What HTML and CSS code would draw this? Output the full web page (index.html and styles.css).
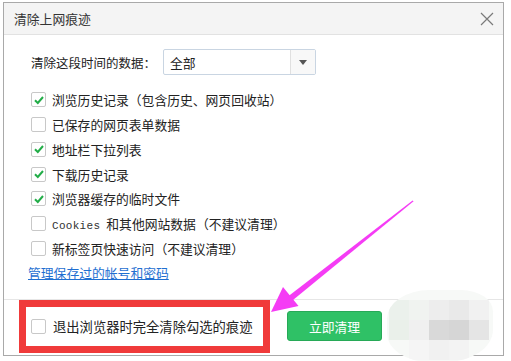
FILE: index.html
```html
<!DOCTYPE html>
<html lang="zh-CN">
<head>
<meta charset="utf-8">
<title>清除上网痕迹</title>
<link rel="stylesheet" href="styles.css">
</head>
<body>
<div class="dialog">
  <div class="titlebar">
    <span class="title">清除上网痕迹</span>
    <svg class="close" width="14" height="14" viewBox="0 0 14 14"><path d="M1 1L13 13M13 1L1 13" stroke="#7a7a7a" stroke-width="1.2" fill="none"/></svg>
  </div>
  <div class="content">
    <div class="range">
      <span class="label">清除这段时间的数据：</span>
      <div class="select">
        <span class="value">全部</span>
        <span class="caret"><svg width="8" height="5" viewBox="0 0 8 5"><path d="M0 0H8L4 5Z" fill="#555"/></svg></span>
      </div>
    </div>
    <ul class="options">
      <li class="row"><span class="cb checked"><svg width="12" height="12" viewBox="0 0 12 12"><path d="M2 6.2L4.8 9L10 3" stroke="#22ad48" stroke-width="2" fill="none"/></svg></span><span>浏览历史记录（包含历史、网页回收站）</span></li>
      <li class="row"><span class="cb"></span><span>已保存的网页表单数据</span></li>
      <li class="row"><span class="cb checked"><svg width="12" height="12" viewBox="0 0 12 12"><path d="M2 6.2L4.8 9L10 3" stroke="#22ad48" stroke-width="2" fill="none"/></svg></span><span>地址栏下拉列表</span></li>
      <li class="row"><span class="cb checked"><svg width="12" height="12" viewBox="0 0 12 12"><path d="M2 6.2L4.8 9L10 3" stroke="#22ad48" stroke-width="2" fill="none"/></svg></span><span>下载历史记录</span></li>
      <li class="row"><span class="cb checked"><svg width="12" height="12" viewBox="0 0 12 12"><path d="M2 6.2L4.8 9L10 3" stroke="#22ad48" stroke-width="2" fill="none"/></svg></span><span>浏览器缓存的临时文件</span></li>
      <li class="row"><span class="cb"></span><span><span class="latin">Cookies</span>和其他网站数据（不建议清理）</span></li>
      <li class="row"><span class="cb"></span><span>新标签页快速访问（不建议清理）</span></li>
      <li class="row"><a class="link" href="#">管理保存过的帐号和密码</a></li>
    </ul>
  </div>
  <div class="footer">
    <div class="highlight">
      <span class="cb"></span>
      <span class="exit-text">退出浏览器时完全清除勾选的痕迹</span>
    </div>
    <button class="primary">立即清理</button>
    <div class="mosaic">
      <i style="left:2px;top:10px;background:#ebf1ec"></i>
      <i style="left:22px;top:10px;background:#f0f3f0"></i>
      <i style="left:42px;top:10px;background:#ededed"></i>
      <i style="left:62px;top:10px;background:#e9e9e9"></i>
      <i style="left:82px;top:10px;background:#f1f1f1"></i>
      <i style="left:2px;top:30px;background:#eaf0ea"></i>
      <i style="left:22px;top:30px;background:#f0f0f0"></i>
      <i style="left:42px;top:30px;background:#d9d9d9"></i>
      <i style="left:62px;top:30px;background:#d6d6d6"></i>
      <i style="left:82px;top:30px;background:#e5e5e5"></i>
      <i style="left:22px;top:50px;background:#f5f5f5"></i>
      <i style="left:42px;top:50px;background:#f1f1f1"></i>
      <i style="left:62px;top:50px;background:#f3f3f3"></i>
    </div>
  </div>
</div>
<svg class="arrow" width="511" height="361" viewBox="0 0 511 361">
  <polygon points="288.6,296 292.4,300.5 413.6,201.3 412.6,200.5" fill="#f53cf5"/>
  <polygon points="271,312 283,287 298.5,306" fill="#f53cf5"/>
</svg>
</body>
</html>
```
FILE: styles.css
```css
* { box-sizing: border-box; }
html, body {
  margin: 0;
  padding: 0;
  background: #fff;
}
body {
  position: relative;
  width: 511px;
  height: 361px;
  overflow: hidden;
  font-family: "Noto Sans CJK SC", "Noto Sans", sans-serif;
  color: #222;
  font-size: 12.8px;
}
.dialog {
  margin: 2px 0 0 3px;
  width: 501px;
  height: 354px;
  border: 1px solid #a9a9a9;
  background: #fff;
  display: flex;
  flex-direction: column;
}
.titlebar {
  height: 32px;
  background: #f4f4f4;
  border-bottom: 1px solid #e2e2e2;
  display: flex;
  align-items: center;
  justify-content: space-between;
  padding: 0 9px 0 10px;
  flex: none;
}
.title {
  font-size: 12.8px;
  color: #333;
}
.close { display: block; }
.content {
  height: 264px;
  flex: none;
  padding: 14px 0 0 27px;
}
.range {
  display: flex;
  align-items: center;
  height: 26px;
}
.label {
  width: 132px;
  font-size: 12.5px;
}
.select {
  width: 153px;
  height: 26px;
  border: 1px solid #c9d5e2;
  border-radius: 2px;
  display: flex;
  align-items: center;
}
.value {
  flex: 1;
  padding-left: 6px;
}
.caret {
  width: 25px;
  height: 100%;
  border-left: 1px solid #e0e0e0;
  background: #f8f8f8;
  display: flex;
  align-items: center;
  justify-content: center;
}
.options {
  list-style: none;
  margin: 12.6px 0 0 0;
  padding: 0;
}
.row {
  height: 24.7px;
  display: flex;
  align-items: center;
  gap: 6px;
}
.cb {
  width: 15px;
  height: 15px;
  border: 1px solid #c8c8c8;
  border-radius: 2px;
  background: #fff;
  display: flex;
  align-items: center;
  justify-content: center;
  flex: none;
}
.latin {
  font-family: "Liberation Mono", monospace;
  font-size: 11px;
  letter-spacing: 0.3px;
  color: #333;
  margin-right: 6px;
}
.link {
  color: #1f6fd1;
  text-decoration: underline;
  margin-left: -3px;
}
.footer {
  flex: 1;
  border-top: 1px solid #e6e6e6;
  display: flex;
  align-items: flex-start;
  position: relative;
}
.highlight {
  margin-left: 15px;
  width: 251px;
  height: 53px;
  border: 7px solid #f03a3a;
  background: #fff;
  display: flex;
  align-items: center;
  gap: 7px;
  padding-left: 5px;
}
.exit-text {
  font-size: 13.3px;
  color: #222;
}
.primary {
  margin: 11px 0 0 17px;
  width: 95px;
  height: 30px;
  background: #2fc166;
  border: 1px solid #27a957;
  border-radius: 3px;
  color: #fff;
  font-family: "Noto Sans CJK SC", sans-serif;
  font-size: 12.8px;
  padding: 0;
}
.mosaic {
  position: absolute;
  left: 383px;
  top: -10px;
  width: 106px;
  height: 72px;
  border-radius: 40% 30% 45% 40%;
  background: #f7f9f7;
  overflow: hidden;
}
.mosaic i {
  position: absolute;
  width: 20px;
  height: 20px;
}
.arrow {
  position: absolute;
  left: 0;
  top: 0;
  pointer-events: none;
}
```
